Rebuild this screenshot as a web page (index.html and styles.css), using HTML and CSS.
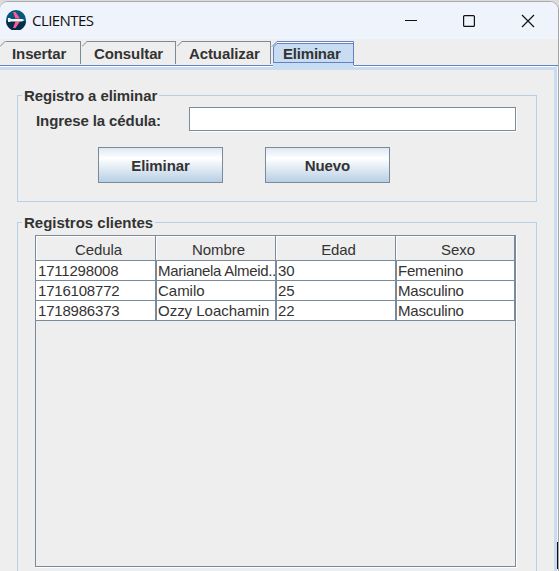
FILE: index.html
```html
<!DOCTYPE html>
<html lang="es">
<head>
<meta charset="utf-8">
<title>CLIENTES</title>
<link rel="stylesheet" href="styles.css">
</head>
<body>
<div class="window">
  <header class="titlebar">
    <svg class="logo" width="20" height="20" viewBox="0 0 20 20">
      <circle cx="10" cy="10" r="10" fill="#07577c"/>
      <path d="M0 11h20a10 10 0 0 1-20 0z" fill="#052c49"/>
      <path d="M7 2h2.500L14 8.500H9.500zM9.500 11.500H14L9.500 18H7z" fill="#ff5a92"/>
      <path d="M2 8h2l1 1h11l2.500 1-2.500 1.500H5L3.500 12H2z" fill="#f2f5f7"/>
    </svg>
    <span class="caption">CLIENTES</span>
    <svg class="controls" width="132" height="14" viewBox="0 0 132 14" fill="none" stroke="#111">
      <path d="M0 6.500h12"/>
      <rect x="58.600" y="1.600" width="10.800" height="10.800" rx="1" stroke-width="1.200"/>
      <path d="M117 1l12 12M129 1l-12 12" stroke-width="1.200"/>
    </svg>
  </header>
  <nav class="tabs">
    <div class="tab first"><svg class="corner" width="6" height="6" viewBox="0 0 6 6"><path d="M0 5.500L5.500 0"/></svg>Insertar</div>
    <div class="tab"><svg class="corner" width="6" height="6" viewBox="0 0 6 6"><path d="M0 5.500L5.500 0"/></svg>Consultar</div>
    <div class="tab"><svg class="corner" width="6" height="6" viewBox="0 0 6 6"><path d="M0 5.500L5.500 0"/></svg>Actualizar</div>
    <div class="tab selected">
      <svg class="shape" width="83" height="29" viewBox="0 0 83 29">
        <path d="M2 29V6l4-5h77v28z" fill="#c8ddf2"/>
        <path d="M6 1.500h76" stroke="#fff"/>
        <path d="M1 5.500L6 .5h76.500V24M2.500 22V6L6 2.500h76.500M2 21.500h80" fill="none" stroke="#6382bf"/>
      </svg>
      <span>Eliminar</span>
    </div>
  </nav>
  <main class="content">
    <fieldset class="group search">
      <legend>Registro a eliminar</legend>
      <div class="field"><label for="cedula">Ingrese la cédula:</label><input id="cedula" type="text"></div>
      <div class="actions"><button>Eliminar</button><button>Nuevo</button></div>
    </fieldset>
    <fieldset class="group records">
      <legend>Registros clientes</legend>
      <div class="scrollpane">
        <div class="row head"><div>Cedula</div><div>Nombre</div><div>Edad</div><div>Sexo</div></div>
        <div class="row"><div>1711298008</div><div class="long">Marianela Almeid..</div><div>30</div><div>Femenino</div></div>
        <div class="row"><div>1716108772</div><div>Camilo</div><div>25</div><div>Masculino</div></div>
        <div class="row"><div>1718986373</div><div>Ozzy Loachamin</div><div>22</div><div>Masculino</div></div>
      </div>
    </fieldset>
  </main>
</div>
</body>
</html>
```
FILE: styles.css
```css
* { box-sizing: border-box; }
body {
  margin: 0;
  width: 559px;
  height: 571px;
  overflow: hidden;
  background: #dcdcdc;
  color: #333;
  font: 15px/18px "Liberation Sans", Arial, sans-serif;
}
.window {
  position: relative;
  height: 571px;
  margin-top: 1px;
  border-top: 1px solid #a9a9a9;
  border-right: 1px solid #a5a5a5;
  border-radius: 8px 9px 0 0;
  overflow: hidden;
  background: #eee;
}
/* dark sliver of the desktop behind the window's lower right edge */
.window::after {
  content: "";
  position: absolute;
  right: 0;
  bottom: 3px;
  width: 1px;
  height: 27px;
  background: #111;
}
.titlebar {
  display: flex;
  align-items: center;
  height: 37px;
  padding: 0 21px 0 6px;
  background: #eff3fb;
}
.logo { position: relative; top: -1px; }
.caption {
  flex: 1;
  margin: -2px 0 0 6px;
  color: #111;
  font: 15px/20px "Open Sans", "Noto Sans", sans-serif;
  letter-spacing: -0.55px;
}
.tabs {
  display: flex;
  height: 27px;
  padding-top: 2px;
  border-bottom: 1px solid #6382bf;
  font-weight: bold;
  letter-spacing: -0.1px;
}
.tab {
  position: relative;
  width: 95px;
  height: 23px;
  padding: 4px 0 0 13px;
  border-right: 1px solid #7a8a99;
  line-height: 18px;
  white-space: nowrap;
}
.tab::before {
  content: "";
  position: absolute;
  top: 0;
  left: 6px;
  right: 0;
  border-top: 1px solid #7a8a99;
}
.first { width: 81px; padding-left: 12px; }
.corner {
  position: absolute;
  left: 1px;
  top: 0;
  fill: none;
  stroke: #7a8a99;
}
.first .corner { left: 0; }
.selected { width: 83px; padding-left: 12px; border: 0; letter-spacing: -0.2px; }
.selected::before { display: none; }
.shape { position: absolute; left: 0; top: 0; z-index: 1; }
.selected span { position: relative; z-index: 2; }
.content {
  height: 505px;
  margin-right: 1px;
  padding: 17px 17px 0;
  border-top: 1px solid #fff;
  border-right: 3px solid #c8ddf2;
  box-shadow: inset 0 3px #c8ddf2, 1px 0 #f4f4f4;
}
.group {
  display: block;
  min-width: 0;
  width: 520px;
  margin: 0;
  padding: 0;
  border: 1px solid #b8cfe5;
}
.group legend {
  height: 18px;
  margin-left: 4px;
  padding: 1px 2px 0;
  font-weight: bold;
  line-height: 18px;
  letter-spacing: -0.1px;
}
.group.records legend { letter-spacing: 0; }
.search { height: 116px; margin-top: 2px; }
.field {
  display: flex;
  height: 25px;
  margin-top: 3px;
  padding-left: 18px;
  font-weight: bold;
}
.field label { width: 153px; line-height: 28px; letter-spacing: -0.1px; }
.field input {
  width: 327px;
  height: 24px;
  margin: 0;
  padding: 0 2px;
  border: 1px solid #7a8a99;
  border-radius: 0;
  outline: 0;
  background: #fff;
  box-shadow: 1px 1px #fff;
  font: inherit;
}
.actions { display: flex; gap: 42px; padding: 15px 0 0 80px; }
.actions button {
  width: 125px;
  height: 36px;
  padding: 2px 0 0;
  border: 1px solid #7a8a99;
  border-radius: 0;
  background: linear-gradient(#dde8f3, #fff 30%, #b8cfe5);
  color: #333;
  font: bold 15px/18px "Liberation Sans", Arial, sans-serif;
  letter-spacing: -0.1px;
}
.records { height: 380px; margin-top: 11px; }
.scrollpane {
  width: 481px;
  height: 332px;
  margin: 4px 0 0 17px;
  border: 1px solid #7a8a99;
  box-shadow: 1px 1px #fff;
}
.row {
  display: grid;
  grid-template: 20px / 120px 120px 120px 119px;
  line-height: 20px;
  background: #fff;
}
.row div {
  padding-left: 2px;
  border-right: 1px solid #7a8a99;
  border-bottom: 1px solid #7a8a99;
  overflow: hidden;
  white-space: nowrap;
  letter-spacing: -0.2px;
}
.row:not(.head) div + div {
  padding-left: 1px;
  border-left: 1px solid #7a8a99;
}
.row:not(.head) div:nth-child(2) { letter-spacing: -0.02px; }
.row:not(.head) .long.long { letter-spacing: -0.3px; }
.head { grid-template-rows: 25px; line-height: 28px; background: #eee; }
.row.head div {
  padding: 0 0 0 6px;
  text-align: center;
  box-shadow: inset 1px 1px #fff;
  letter-spacing: -0.08px;
}
```
